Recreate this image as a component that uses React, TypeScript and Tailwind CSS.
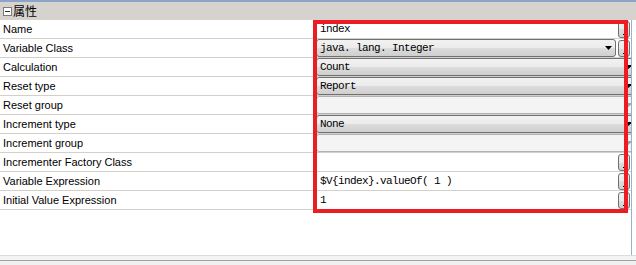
import React from "react";

type Row = {
  label: string;
  kind: "text" | "combo" | "disabled";
  value?: string;
  button?: boolean;
};

const rows: Row[] = [
  { label: "Name", kind: "text", value: "index", button: true },
  { label: "Variable Class", kind: "combo", value: "java. lang. Integer", button: true },
  { label: "Calculation", kind: "combo", value: "Count" },
  { label: "Reset type", kind: "combo", value: "Report" },
  { label: "Reset group", kind: "disabled" },
  { label: "Increment type", kind: "combo", value: "None" },
  { label: "Increment group", kind: "disabled" },
  { label: "Incrementer Factory Class", kind: "text", value: "", button: true },
  { label: "Variable Expression", kind: "text", value: "$V{index}.valueOf( 1 )", button: true },
  { label: "Initial Value Expression", kind: "text", value: "1", button: true },
];

const mono = "font-['SimSun','Liberation_Mono',monospace] text-[11px] tracking-[-0.6px] text-black";

function DotsButton() {
  return (
    <div className="w-[12px] h-[17px] shrink-0 mr-[1px] rounded-[3px] border border-[#707070] bg-[linear-gradient(to_bottom,#f2f2f2_0%,#ebebeb_50%,#dddddd_50%,#cfcfcf_100%)] flex items-end justify-center pb-[2px]">
      <div className="flex gap-[1px]">
        <span className="w-[1px] h-[1px] bg-black" />
        <span className="w-[1px] h-[1px] bg-black" />
      </div>
    </div>
  );
}

function Arrow({ gray }: { gray?: boolean }) {
  return (
    <svg width="7" height="4" viewBox="0 0 7 4" className="shrink-0">
      <path d="M0 0H7L3.5 4Z" fill={gray ? "#a0a0a0" : "#000"} />
    </svg>
  );
}

function Combo({ value, withButton, disabled }: { value?: string; withButton?: boolean; disabled?: boolean }) {
  const base = disabled
    ? "border-[#adb2b5] bg-[#f4f4f4]"
    : "border-[#707070] bg-[linear-gradient(to_bottom,#f2f2f2_0%,#ebebeb_50%,#dddddd_50%,#cfcfcf_100%)]";
  return (
    <div
      className={`h-[18px] rounded-[3px] border ${base} flex items-center pl-[3px] pr-[3px] ${
        withButton ? "flex-1 mr-[2px]" : "w-[320px] shrink-0"
      }`}
    >
      <span className={`${mono} flex-1 leading-[16px] whitespace-pre`}>{value}</span>
      <Arrow gray={disabled} />
    </div>
  );
}

export default function App() {
  return (
    <div className="w-[636px] h-[265px] overflow-hidden bg-white flex flex-col font-['Liberation_Sans',Arial,sans-serif]">
      <div className="h-[2px] bg-[#8ca5c6] shrink-0" />
      <div className="h-[18px] bg-[#d6d3ce] flex items-center pl-[3px] shrink-0">
        <div className="w-[9px] h-[9px] border border-[#7a7a7a] bg-white flex items-center justify-center mr-[1px]">
          <div className="w-[5px] h-[1px] bg-[#303030]" />
        </div>
        <span className="font-['Noto_Sans_CJK_SC',sans-serif] text-[12px] leading-[16px] text-black">属性</span>
      </div>

      <div className="flex flex-1 relative">
        <div className="w-[632px] overflow-hidden flex flex-col border-r border-[#9db0c8]">
          {rows.map((r) => (
            <div key={r.label} className="h-[19px] flex border-b border-[#d4d0c8] shrink-0">
              <div className="w-[313px] shrink-0 pl-[3px] text-[11px] leading-[18px] text-black whitespace-nowrap">
                {r.label}
              </div>
              <div className="flex-1 flex items-center pl-[3px] min-w-0">
                {r.kind === "text" && (
                  <>
                    <span className={`${mono} flex-1 pl-[4px] leading-[18px] whitespace-pre`}>{r.value}</span>
                    {r.button && <DotsButton />}
                  </>
                )}
                {r.kind === "combo" && (
                  <>
                    <Combo value={r.value} withButton={r.button} />
                    {r.button && <DotsButton />}
                  </>
                )}
                {r.kind === "disabled" && <Combo disabled />}
              </div>
            </div>
          ))}
          <div className="flex-1" />
        </div>
        <div className="flex-1" />

        <div className="absolute left-[313px] top-[0px] w-[315px] h-[193px] border-[4px] border-[#ec1c24] pointer-events-none" />
      </div>

      <div className="h-[10px] shrink-0 flex flex-col">
        <div className="h-[1px] bg-[#dcdcdc]" />
        <div className="h-[4px] bg-[#f4f4f4]" />
        <div className="h-[1px] bg-[#a0a0a0]" />
        <div className="flex-1 bg-[#f0f0f0]" />
      </div>
    </div>
  );
}
